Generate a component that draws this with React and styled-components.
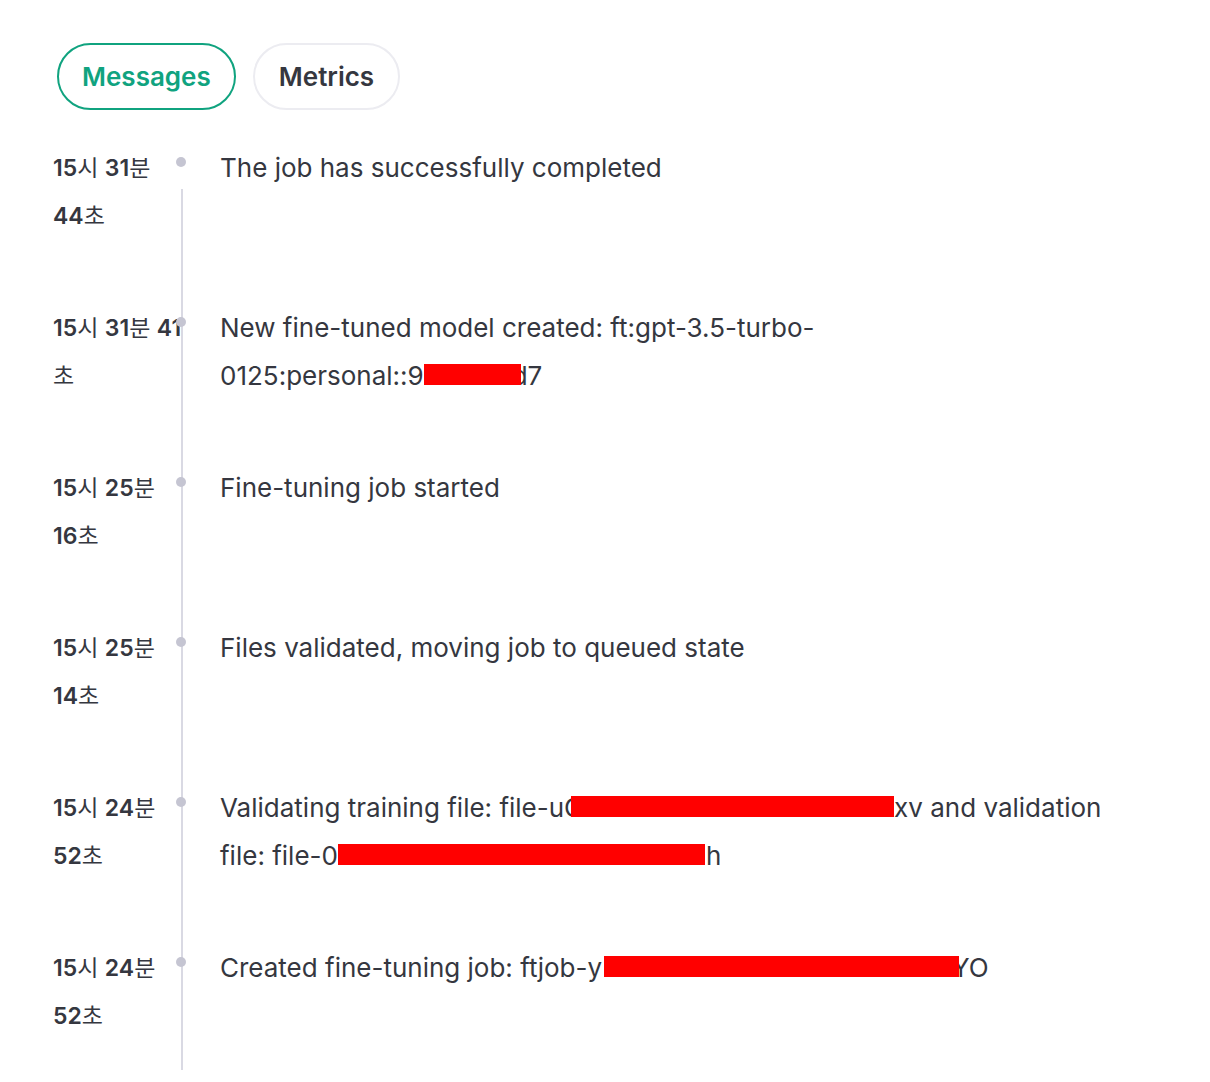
import React from "react";
import styled, { createGlobalStyle } from "styled-components";

const GlobalStyle = createGlobalStyle`
    body {
        margin: 0;
        background: #ffffff;
        font-family: Inter, "Noto Sans", "Noto Sans CJK KR", sans-serif;
        color: #353740;
    }
`;

const Page = styled.div`
    display: flex;
    flex-direction: column;
    padding: 43px 90px 0 53px;
`;

const Tabs = styled.div`
    display: flex;
    gap: 17px;
    margin-left: 4px;
`;

const Pill = styled.button`
    height: 67px;
    padding: 0 ${(p) => (p.$active ? "23px" : "24px")};
    border-radius: 999px;
    background: #ffffff;
    border: 2px solid ${(p) => (p.$active ? "#10a37f" : "#ececf1")};
    color: ${(p) => (p.$active ? "#10a37f" : "#353740")};
    font-family: Inter, sans-serif;
    font-size: 26px;
    font-weight: 600;
    cursor: pointer;
`;

const Timeline = styled.div`
    display: flex;
    flex-direction: column;
    margin-top: 34px;
`;

const Row = styled.div`
    display: flex;
    height: ${(p) => (p.$last ? "126px" : "160px")};
`;

const Time = styled.div`
    width: 129px;
    flex-shrink: 0;
    font-size: 23px;
    line-height: 48px;
    font-family: Inter, "Noto Sans CJK KR", sans-serif;
    color: #353740;
    b {
        font-weight: 600;
    }
`;

const Rail = styled.div`
    width: 10px;
    margin-left: -6px;
    flex-shrink: 0;
    background: linear-gradient(#d9d9e3, #d9d9e3) no-repeat;
    background-size: 2px ${(p) => (p.$first ? "calc(100% - 45px)" : "100%")};
    background-position: 5px ${(p) => (p.$first ? "45px" : "0")};
`;

const Dot = styled.div`
    width: 10px;
    height: 10px;
    border-radius: 50%;
    background: #c5c5d2;
    margin-top: 13px;
`;

const Message = styled.div`
    flex: 1;
    margin-left: 34px;
    font-size: 26px;
    line-height: 48px;
    color: #353740;
`;

const Keep = styled.span`
    white-space: nowrap;
`;

const Redact = styled.span`
    display: inline-block;
    position: relative;
    width: ${(p) => p.$w}px;
    height: 21px;
    background: #ff0000;
    margin-left: ${(p) => p.$under || 0}px;
    margin-right: ${(p) => p.$overlap || 0}px;
    vertical-align: baseline;
`;

const T = ({ h, m, s }) => (
    <Time>
        <b>{h}</b>시 <b>{m}</b>분 <b>{s}</b>초
    </Time>
);

const events = [
    {
        time: ["15", "31", "44"],
        body: "The job has successfully completed",
    },
    {
        time: ["15", "31", "41"],
        body: (
            <>
                New fine-tuned model created: ft:gpt-3.5-turbo-
                <Keep>
                    0125:personal::9<Redact $w={97} $overlap={-9} />d7
                </Keep>
            </>
        ),
    },
    {
        time: ["15", "25", "16"],
        body: "Fine-tuning job started",
    },
    {
        time: ["15", "25", "14"],
        body: "Files validated, moving job to queued state",
    },
    {
        time: ["15", "24", "52"],
        body: (
            <>
                Validating training file:{" "}
                <Keep>
                    file-uC<Redact $w={323} $under={-12} />xv
                </Keep>{" "}
                and validation file:{" "}
                <Keep>
                    file-0<Redact $w={367} $overlap={1} />h
                </Keep>
            </>
        ),
    },
    {
        time: ["15", "24", "52"],
        body: (
            <>
                Created fine-tuning job:{" "}
                <Keep>
                    ftjob-y<Redact $w={355} $under={2} $overlap={-7} />YO
                </Keep>
            </>
        ),
    },
];

export default function App() {
    return (
        <Page>
            <GlobalStyle />
            <Tabs>
                <Pill $active>Messages</Pill>
                <Pill>Metrics</Pill>
            </Tabs>
            <Timeline>
                {events.map((e, i) => (
                    <Row key={i} $last={i === events.length - 1}>
                        <T h={e.time[0]} m={e.time[1]} s={e.time[2]} />
                        <Rail $first={i === 0}>
                            <Dot />
                        </Rail>
                        <Message>{e.body}</Message>
                    </Row>
                ))}
            </Timeline>
        </Page>
    );
}
